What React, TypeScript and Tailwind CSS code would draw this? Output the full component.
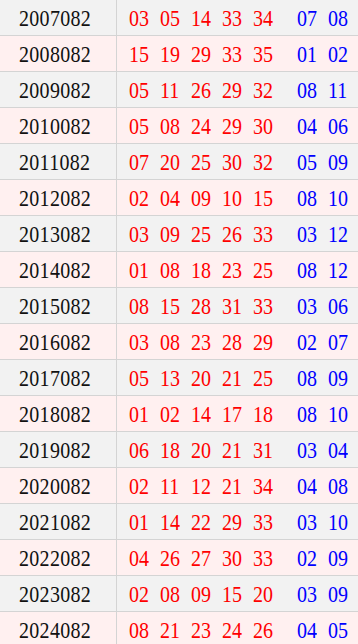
import React from "react";

const rows: [string, string[], string[]][] = [
  ["2007082", ["03", "05", "14", "33", "34"], ["07", "08"]],
  ["2008082", ["15", "19", "29", "33", "35"], ["01", "02"]],
  ["2009082", ["05", "11", "26", "29", "32"], ["08", "11"]],
  ["2010082", ["05", "08", "24", "29", "30"], ["04", "06"]],
  ["2011082", ["07", "20", "25", "30", "32"], ["05", "09"]],
  ["2012082", ["02", "04", "09", "10", "15"], ["08", "10"]],
  ["2013082", ["03", "09", "25", "26", "33"], ["03", "12"]],
  ["2014082", ["01", "08", "18", "23", "25"], ["08", "12"]],
  ["2015082", ["08", "15", "28", "31", "33"], ["03", "06"]],
  ["2016082", ["03", "08", "23", "28", "29"], ["02", "07"]],
  ["2017082", ["05", "13", "20", "21", "25"], ["08", "09"]],
  ["2018082", ["01", "02", "14", "17", "18"], ["08", "10"]],
  ["2019082", ["06", "18", "20", "21", "31"], ["03", "04"]],
  ["2020082", ["02", "11", "12", "21", "34"], ["04", "08"]],
  ["2021082", ["01", "14", "22", "29", "33"], ["03", "10"]],
  ["2022082", ["04", "26", "27", "30", "33"], ["02", "09"]],
  ["2023082", ["02", "08", "09", "15", "20"], ["03", "09"]],
  ["2024082", ["08", "21", "23", "24", "26"], ["04", "05"]],
];

const App: React.FC = () => {
  return (
    <div
      className="w-[358px] h-[644px] overflow-hidden bg-white text-[20px] leading-none"
      style={{ fontFamily: '"Liberation Serif", "Noto Sans CJK SC", serif' }}
    >
      {rows.map(([issue, reds, blues], i) => (
        <div
          key={issue}
          className={`flex h-[36px] border-b border-[#d4d4d4] ${i % 2 === 0 ? "bg-[#f2f2f2]" : "bg-[#fff0f0]"}`}
        >
          {/* issue number */}
          <div className="w-[117px] shrink-0 flex items-center pl-[19px] border-r border-[#d4d4d4] text-[#111]">
            <span className="inline-block scale-y-[1.12] tracking-[0.3px]">{issue}</span>
          </div>
          <div className="flex items-center pl-[12px]">
            <div className="flex gap-[11px] text-[#ff0000]">
              {reds.map((n, j) => (
                <span key={j} className="w-[20px] scale-y-[1.12]">{n}</span>
              ))}
            </div>
            <div className="flex gap-[11px] text-[#0000ff] ml-[24px]">
              {blues.map((n, j) => (
                <span key={j} className="w-[20px] scale-y-[1.12]">{n}</span>
              ))}
            </div>
          </div>
        </div>
      ))}
    </div>
  );
};

export default App;
